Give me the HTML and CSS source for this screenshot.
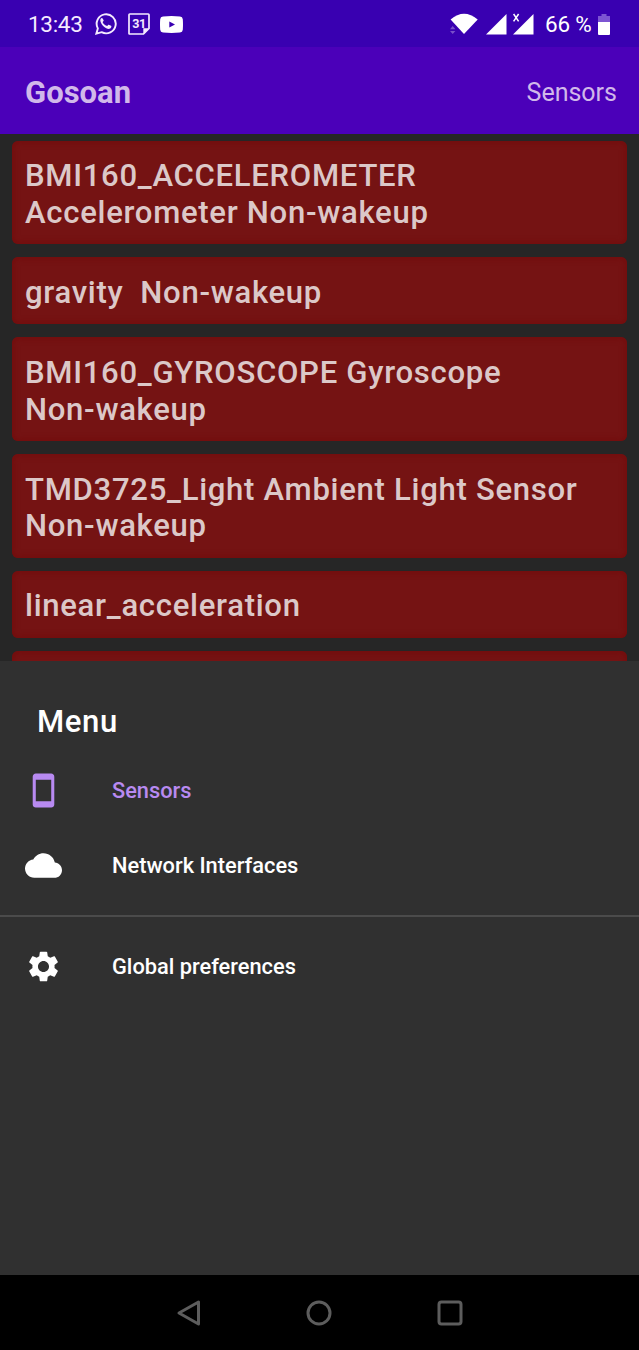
FILE: index.html
```html
<!DOCTYPE html>
<html lang="en">
<head>
<meta charset="utf-8">
<title>Gosoan</title>
<link rel="stylesheet" href="styles.css">
</head>
<body>
<div class="screen">
  <header class="status">
    <span class="clock">13:43</span>
    <svg class="whatsapp" width="22" height="22" viewBox="0 0 24 24"><path fill="none" stroke="currentColor" stroke-width="2.1" d="M1.5 22.5 3.1 16.8A10.4 10.4 0 1 1 7.2 20.9Z"/><path fill="currentColor" d="M8.2 5.9c-.3-.6-1.3-.5-1.8.2-2.5 3 2.7 9.8 7.1 11.1 2 .5 4-.5 4.3-2 .1-.8 0-1-.3-1.2l-2.5-1.2c-.5-.2-.7 0-1.4 1-.3.4-.6.4-1 .2-1.9-.8-3-1.8-4.1-3.7-.2-.4 0-.7.9-1.8.2-.3.1-.6-.1-1Z"/></svg>
    <span class="calendar"><svg width="22" height="22" viewBox="0 0 22 22"><path fill="none" stroke="currentColor" stroke-width="1.7" stroke-linejoin="round" d="M1.8 1h18.400q.8 0 .8.8V15.500L15.500 21H1.800q-.8 0-.8-.8V1.800Q1 1 1.800 1Z"/><path fill="currentColor" d="M15.300 15.300H21L15.300 21Z"/></svg><span class="day">31</span></span>
    <svg class="youtube" width="23" height="17" viewBox="0 0 23 17"><path fill="currentColor" fill-rule="evenodd" d="M3 .5Q11.500-.3 20 .5 22.600.8 22.800 3.200 23.200 8.500 22.800 13.800 22.600 16.200 20 16.500 11.500 17.300 3 16.500.400 16.200.200 13.800-.2 8.500.2 3.200.400.800 3 .5ZM9.300 5.500V11.500L15 8.500Z"/></svg>
    <div class="system">
      <svg width="28" height="22" viewBox="0 0 28 22"><path fill="#fff" d="M.6 6.500Q14-5 27.700 6.500L14 21Z"/><path fill="#7950c9" d="M0 16.300 2.700 13l2.700 3.300ZM0 18h5.400l-2.700 3Z"/></svg>
      <svg class="signal" width="21" height="21" viewBox="0 0 21 21"><path fill="currentColor" d="M20.500 0V20.500H0Z"/></svg>
      <svg class="signal-x" width="21" height="21" viewBox="0 0 21 21"><path fill="currentColor" d="M20.500 0V20.500H0Z"/><path d="M.6 0 5.600 7.300M5.600 0 .6 7.300" stroke="#fff" stroke-width="1.500"/></svg>
      <span class="percent">66 %</span>
      <svg width="12" height="21" viewBox="0 0 12 21"><path fill="#7d55d2" d="M3.500 0h5v2H12v6H0V2h3.500Z"/><path fill="#fff" d="M0 8h12v12q0 1-1 1H1q-1 0-1-1Z"/></svg>
    </div>
  </header>
  <div class="appbar"><h1 class="brand">Gosoan</h1><span class="page">Sensors</span></div>
  <main class="list">
    <div class="card">BMI160_ACCELEROMETER<br>Accelerometer Non-wakeup</div>
    <div class="card">gravity&nbsp; Non-wakeup</div>
    <div class="card">BMI160_GYROSCOPE Gyroscope<br>Non-wakeup</div>
    <div class="card">TMD3725_Light Ambient Light Sensor<br>Non-wakeup</div>
    <div class="card">linear_acceleration</div>
    <div class="card"></div>
  </main>
  <nav class="sheet">
    <h2 class="title">Menu</h2>
    <div class="item active"><svg class="icon" viewBox="0 0 24 24"><path fill="currentColor" d="M17 1.010 7 1c-1.100 0-2 .9-2 2v18c0 1.100.9 2 2 2h10c1.100 0 2-.9 2-2V3c0-1.100-.9-1.990-2-1.990zM17 19H7V5h10v14z"/></svg><span>Sensors</span></div>
    <div class="item"><svg class="icon" viewBox="0 0 24 24"><path fill="currentColor" d="M19.350 10.040C18.670 6.590 15.640 4 12 4 9.110 4 6.600 5.640 5.350 8.040 2.340 8.360 0 10.910 0 14c0 3.310 2.690 6 6 6h13c2.760 0 5-2.240 5-5 0-2.640-2.050-4.780-4.650-4.960z"/></svg><span>Network Interfaces</span></div>
    <div class="divider"></div>
    <div class="item"><svg class="icon" viewBox="0 0 24 24"><path fill="currentColor" d="M19.140 12.940c.04-.3.060-.61.060-.94 0-.32-.02-.64-.07-.94l2.030-1.580c.18-.14.230-.41.120-.61l-1.920-3.320c-.12-.22-.37-.29-.59-.22l-2.390.96c-.5-.38-1.030-.7-1.620-.94l-.36-2.540c-.04-.24-.24-.41-.48-.41h-3.840c-.24 0-.43.170-.47.410l-.36 2.540c-.59.240-1.130.570-1.620.940l-2.390-.96c-.22-.08-.47 0-.59.220L2.740 8.870c-.12.210-.08.470.120.610l2.030 1.580c-.05.300-.09.630-.09.940s.02.640.070.940l-2.030 1.580c-.18.140-.23.410-.12.610l1.920 3.320c.12.220.37.290.59.220l2.390-.96c.5.380 1.030.7 1.620.94l.36 2.540c.05.240.24.410.48.410h3.840c.24 0 .44-.17.470-.41l.36-2.540c.59-.24 1.130-.56 1.620-.94l2.390.96c.22.080.47 0 .59-.22l1.920-3.320c.12-.22.070-.47-.12-.61l-2.010-1.580zM12 15.600c-1.980 0-3.600-1.620-3.600-3.600s1.620-3.600 3.600-3.600 3.600 1.620 3.600 3.600-1.620 3.600-3.600 3.600z"/></svg><span>Global preferences</span></div>
  </nav>
  <footer class="navbar">
    <svg width="26" height="28" viewBox="0 0 26 28"><path d="M3 14 22.500 3V25Z"/></svg>
    <svg width="28" height="28" viewBox="0 0 28 28"><circle cx="14" cy="14" r="11"/></svg>
    <svg width="28" height="28" viewBox="0 0 28 28"><rect x="3" y="3" width="22" height="22" rx="2.500"/></svg>
  </footer>
</div>
</body>
</html>
```
FILE: styles.css
```css
* { box-sizing: border-box; }
body { margin: 0; background: #000; font-family: Roboto, sans-serif; }
svg { display: block; flex: none; }
.screen { width: 639px; height: 1350px; display: flex; flex-direction: column; overflow: hidden; background: #262626; }
.status { height: 47px; flex: none; display: flex; align-items: center; padding: 1px 29px 0 28px; background: #3900b1; color: #f5eaff; }
.clock { width: 67px; font-size: 22.500px; letter-spacing: -0.300px; white-space: nowrap; }
.whatsapp { margin-right: 11px; }
.calendar { display: grid; margin-right: 10px; }
.calendar > * { grid-area: 1 / 1; }
.day { font-size: 12.500px; font-weight: 700; line-height: 21px; text-align: center; letter-spacing: -0.500px; }
.youtube { color: #fff; }
.system { margin-left: auto; display: flex; align-items: center; color: #fff; }
.signal { margin-left: 8px; }
.signal-x { margin-left: 6px; overflow: visible; }
.percent { width: 46px; margin: 0 7px 0 11px; font-size: 22.500px; letter-spacing: -0.200px; white-space: nowrap; }
.appbar { height: 87px; flex: none; display: flex; align-items: center; justify-content: space-between; padding: 4px 22px 0 25px; background: #4b00b9; color: #d1b8ea; }
.brand { margin: 0; font-size: 31px; font-weight: 700; }
.page { font-size: 25px; }
.list { height: 527px; flex: none; overflow: hidden; display: flex; flex-direction: column; gap: 13.300px; padding: 6.700px 12.500px 0 12px; }
.card { flex: none; min-height: 66.700px; padding: 17.500px 13px 12.500px; border-radius: 6px; background: #751313; box-shadow: inset 0 0 6px 1px #720c0c; color: #dcc8c8; font-size: 31.100px; font-weight: 500; line-height: 36.700px; letter-spacing: 0.700px; white-space: nowrap; }
.sheet { height: 614px; flex: none; padding-top: 42px; background: #303030; color: #fff; }
.title { margin: 0; padding-left: 37px; font-size: 31.100px; line-height: 38px; font-weight: 500; letter-spacing: 0.600px; }
.item { height: 75px; display: flex; align-items: center; gap: 50px; padding-left: 25px; font-size: 21.800px; font-weight: 500; }
.item span { padding-top: 1px; }
.title + .item { margin-top: 11.500px; }
.active { color: #b88af1; }
.icon { width: 37px; height: 37px; }
.divider { height: 2px; margin: 12px 0; background: #4b4b4b; }
.navbar { flex: 1; display: flex; align-items: center; justify-content: space-between; padding: 0 175px 0 176px; background: #000; }
.navbar svg { fill: none; stroke: #5d5d5d; stroke-width: 3; stroke-linejoin: round; }
```
